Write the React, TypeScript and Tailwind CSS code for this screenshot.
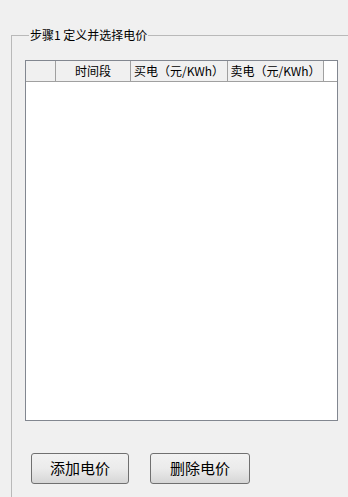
import React from 'react';

const cols = [
  { w: 'w-[30px]', label: '' },
  { w: 'w-[75px]', label: '时间段' },
  { w: 'w-[97px]', label: '买电（元/KWh）' },
  { w: 'w-[96px]', label: '卖电（元/KWh）' },
];

function WinButton({ label, w }: { label: string; w: string }) {
  return (
    <button
      className={`${w} h-[31px] rounded-[3px] border border-[#707070] bg-gradient-to-b from-[#f2f2f2] via-[#ebebeb] to-[#d6d6d6] text-[15px] text-black`}
    >
      {label}
    </button>
  );
}

export default function App() {
  return (
    <div
      className="w-[348px] h-[497px] bg-[#f0f0f0] overflow-hidden pt-[27px] pl-[11px]"
      style={{ fontFamily: '"Noto Sans CJK SC", "Liberation Sans", sans-serif' }}
    >
      <fieldset className="w-[336px] h-[500px] border border-[#b9b9b9] px-[13px]">
        <legend className="ml-[4px] px-[1px] text-[12px] leading-[16px] text-black">步骤1 定义并选择电价</legend>

        <div className="mt-[17px] w-[313px] h-[361px] border border-[#828790] bg-white">
          <div className="flex h-[21px] border-b border-[#a0a0a0]">
            {cols.map((c, i) => (
              <div
                key={i}
                className={`${c.w} shrink-0 bg-[#f0f0f0] border-r border-[#a0a0a0] flex items-center justify-center text-[12px] leading-none text-black whitespace-nowrap`}
              >
                {c.label}
              </div>
            ))}
            <div className="flex-1 bg-white" />
          </div>
        </div>

        <div className="mt-[32px] ml-[6px] flex gap-[21px]">
          <WinButton label="添加电价" w="w-[98px]" />
          <WinButton label="删除电价" w="w-[100px]" />
        </div>
      </fieldset>
    </div>
  );
}
